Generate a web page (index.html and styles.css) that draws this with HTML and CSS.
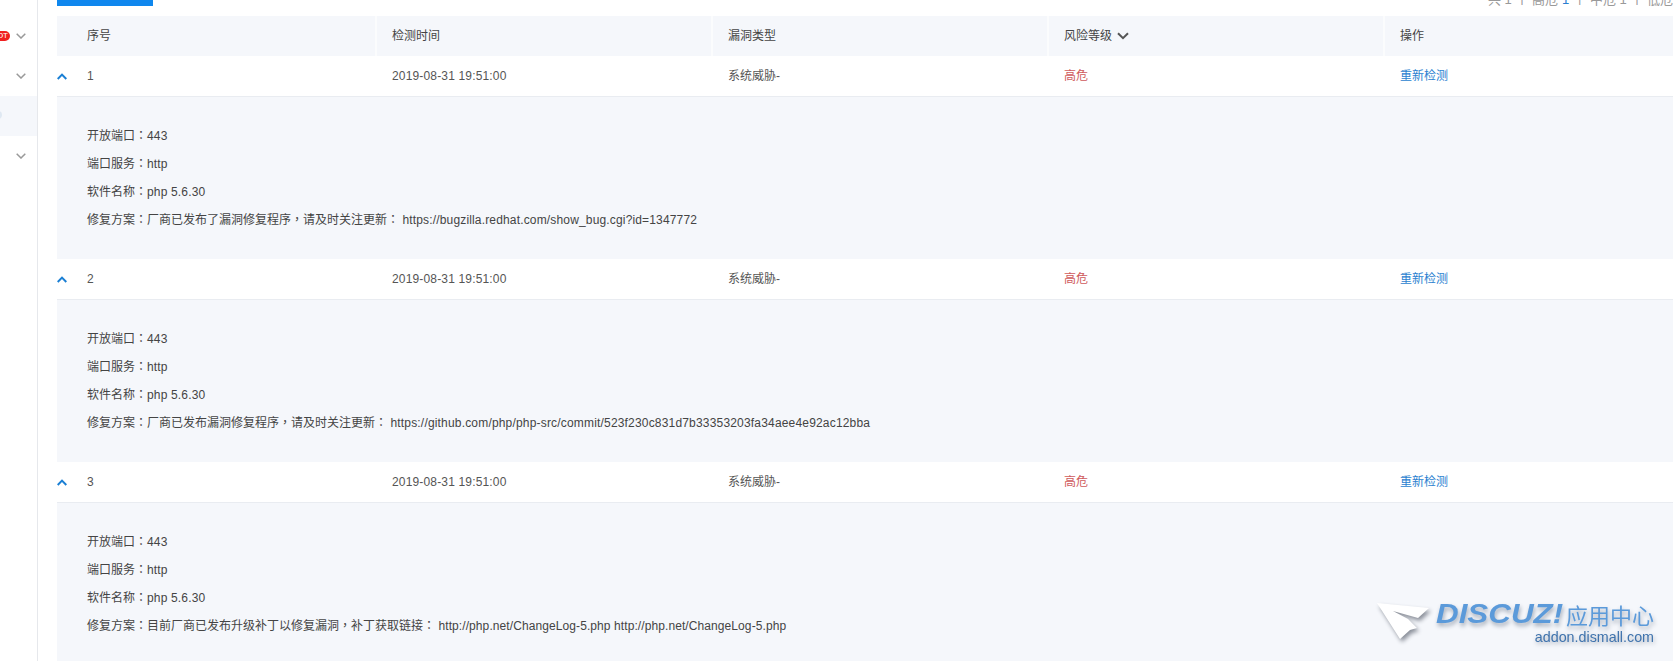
FILE: index.html
```html
<!DOCTYPE html>
<html lang="zh">
<head>
<meta charset="utf-8">
<title>漏洞列表</title>
<link rel="stylesheet" href="styles.css">
</head>
<body>
<div class="page">
  <aside class="side">
    <div class="side-item"><span class="hot">HOT</span><svg class="chev" viewBox="0 0 10 6"><path d="M.7.7 5 5 9.3.7"/></svg></div>
    <div class="side-item"><svg class="chev" viewBox="0 0 10 6"><path d="M.7.7 5 5 9.3.7"/></svg></div>
    <div class="side-item active"><span class="dot"></span></div>
    <div class="side-item"><svg class="chev" viewBox="0 0 10 6"><path d="M.7.7 5 5 9.3.7"/></svg></div>
  </aside>
  <main class="main">
    <div class="topbar">
      <div class="blue"></div>
      <div class="summary">共 1 个 高危<b class="num">1</b>个 中危 1 个 低危</div>
    </div>
    <div class="grid head">
      <div class="cell first">序号</div>
      <div class="cell">检测时间</div>
      <div class="cell">漏洞类型</div>
      <div class="cell">风险等级<svg class="sort" viewBox="0 0 12 8"><path d="M1 1.2 6 6.2 11 1.2"/></svg></div>
      <div class="cell">操作</div>
    </div>

    <div class="grid row">
      <div class="cell first"><svg class="up" viewBox="0 0 10 7"><path d="M.7 6 5 1.6 9.3 6"/></svg>1</div>
      <div class="cell"><span class="lat">2019-08-31 19:51:00</span></div>
      <div class="cell">系统威胁-</div>
      <div class="cell risk">高危</div>
      <div class="cell link">重新检测</div>
    </div>
    <div class="detail">
      <p>开放端口<span class="pn" lang="zh-Hant">：</span><span class="lat">443</span></p>
      <p>端口服务<span class="pn" lang="zh-Hant">：</span><span class="lat">http</span></p>
      <p>软件名称<span class="pn" lang="zh-Hant">：</span><span class="lat">php 5.6.30</span></p>
      <p>修复方案<span class="pn" lang="zh-Hant">：</span>厂商已发布了漏洞修复程序<span class="pn" lang="zh-Hant">，</span>请及时关注更新<span class="pn" lang="zh-Hant">：</span> <span class="lat">https://bugzilla.redhat.com/show_bug.cgi?id=1347772</span></p>
    </div>

    <div class="grid row">
      <div class="cell first"><svg class="up" viewBox="0 0 10 7"><path d="M.7 6 5 1.6 9.3 6"/></svg>2</div>
      <div class="cell"><span class="lat">2019-08-31 19:51:00</span></div>
      <div class="cell">系统威胁-</div>
      <div class="cell risk">高危</div>
      <div class="cell link">重新检测</div>
    </div>
    <div class="detail">
      <p>开放端口<span class="pn" lang="zh-Hant">：</span><span class="lat">443</span></p>
      <p>端口服务<span class="pn" lang="zh-Hant">：</span><span class="lat">http</span></p>
      <p>软件名称<span class="pn" lang="zh-Hant">：</span><span class="lat">php 5.6.30</span></p>
      <p>修复方案<span class="pn" lang="zh-Hant">：</span>厂商已发布漏洞修复程序<span class="pn" lang="zh-Hant">，</span>请及时关注更新<span class="pn" lang="zh-Hant">：</span> <span class="lat wide">https://github.com/php/php-src/commit/523f230c831d7b33353203fa34aee4e92ac12bba</span></p>
    </div>

    <div class="grid row">
      <div class="cell first"><svg class="up" viewBox="0 0 10 7"><path d="M.7 6 5 1.6 9.3 6"/></svg>3</div>
      <div class="cell"><span class="lat">2019-08-31 19:51:00</span></div>
      <div class="cell">系统威胁-</div>
      <div class="cell risk">高危</div>
      <div class="cell link">重新检测</div>
    </div>
    <div class="detail">
      <p>开放端口<span class="pn" lang="zh-Hant">：</span><span class="lat">443</span></p>
      <p>端口服务<span class="pn" lang="zh-Hant">：</span><span class="lat">http</span></p>
      <p>软件名称<span class="pn" lang="zh-Hant">：</span><span class="lat">php 5.6.30</span></p>
      <p>修复方案<span class="pn" lang="zh-Hant">：</span>目前厂商已发布升级补丁以修复漏洞<span class="pn" lang="zh-Hant">，</span>补丁获取链接<span class="pn" lang="zh-Hant">：</span> <span class="lat tight">http://php.net/ChangeLog-5.php http://php.net/ChangeLog-5.php</span></p>
    </div>
  </main>
</div>
<div class="mark">
  <svg class="plane" viewBox="0 0 54 38"><path d="M1 1 53 6 42 16 17 9 32 17 41 26 34 28 24 37Z"/></svg>
  <div class="mark-text">
    <div class="mark-top"><span class="dz">DISCUZ!</span><span class="cn">应用中心</span></div>
    <div class="mark-url">addon.dismall.com</div>
  </div>
</div>
</body>
</html>
```
FILE: styles.css
```css
* { box-sizing: border-box; }
html, body { margin: 0; height: 661px; overflow: hidden; background: #fff; }
body { font-family: "Liberation Sans", "Noto Sans CJK SC", sans-serif; font-size: 12px; color: #444; position: relative; }
.page { display: flex; height: 661px; overflow: hidden; }
.side { width: 38px; flex: none; border-right: 1px solid #e6e8ec; padding-top: 16px; }
.side-item { height: 40px; position: relative; display: flex; align-items: center; justify-content: flex-end; padding-right: 11px; overflow: hidden; }
.side-item.active { background: #f5f7fb; }
.dot { position: absolute; left: -5px; top: 15px; width: 7px; height: 8px; border-radius: 50%; background: #dfe8f2; }
.chev { width: 10px; height: 6px; fill: none; stroke: #999; stroke-width: 1.5; }
.hot { position: absolute; right: 27px; top: 15px; background: #f02020; color: #fff; font-size: 8px; line-height: 10px; height: 10px; padding: 0 2px 0 6px; border-radius: 5px; }
.main { flex: 1; min-width: 0; padding-left: 19px; }
.topbar { height: 16px; display: flex; justify-content: space-between; align-items: flex-start; position: relative; overflow: hidden; }
.blue { width: 96px; height: 6px; background: #0f87ee; }
.summary { position: absolute; right: 0; top: -11px; font-size: 13px; color: #999; white-space: nowrap; }
.num { font-weight: 400; color: #2a7fd0; margin: 0 4px; }
.grid { display: grid; grid-template-columns: 318px 336px 336px 336px 1fr; }
.head { height: 40px; background: #f5f7fb; }
.cell { display: flex; align-items: center; padding-left: 17px; white-space: nowrap; color: #444; line-height: 16px; }
.cell.first { padding-left: 30px; position: relative; }
.head .cell { border-left: 2px solid #fbfcfd; padding-left: 15px; }
.head .cell.first { border-left: 0; padding-left: 30px; }
.row { height: 41px; background: #fff; border-bottom: 1px solid #e9ecf1; }
.row .cell { color: #555; padding-bottom: 1px; }
.lat { letter-spacing: .16px; }
.lat.wide { letter-spacing: .18px; }
.lat.tight { letter-spacing: .09px; }
.pn { font-family: "Noto Sans CJK TC", sans-serif; }
.up { position: absolute; left: 0; top: 17px; width: 10px; height: 7px; fill: none; stroke: #1a7fd4; stroke-width: 2; }
.sort { width: 12px; height: 8px; margin-left: 5px; fill: none; stroke: #555; stroke-width: 2; }
.row .risk { color: #cf5a5c; }
.row .link { color: #2a7fd0; }
.detail { height: 162px; background: #f5f7fb; padding: 24px 0 0 30px; }
.detail p { margin: 0; height: 28px; line-height: 28px; white-space: nowrap; color: #444; }
.mark { position: absolute; left: 1376px; top: 601px; width: 278px; display: flex; justify-content: space-between; }
.plane { width: 54px; height: 38px; margin-top: 1px; fill: #fff; filter: drop-shadow(2px 3px 2px #8a8f99); }
.mark-text { display: flex; flex-direction: column; align-items: flex-end; }
.mark-top { display: flex; align-items: center; height: 26px; color: #5b9ada; white-space: nowrap; filter: drop-shadow(1px 3px 2px #a5adba); }
.dz { font-family: "Liberation Sans", sans-serif; font-style: italic; font-weight: 700; font-size: 28px; display: inline-block; transform: scaleX(1.12); transform-origin: left center; margin-right: 14px; }
.cn { font-size: 22px; margin-left: 2px; }
.mark-url { font-size: 14.3px; color: #3f73ad; line-height: 16px; margin-top: 2px; filter: drop-shadow(1px 2px 2px #a5adba); }
```
